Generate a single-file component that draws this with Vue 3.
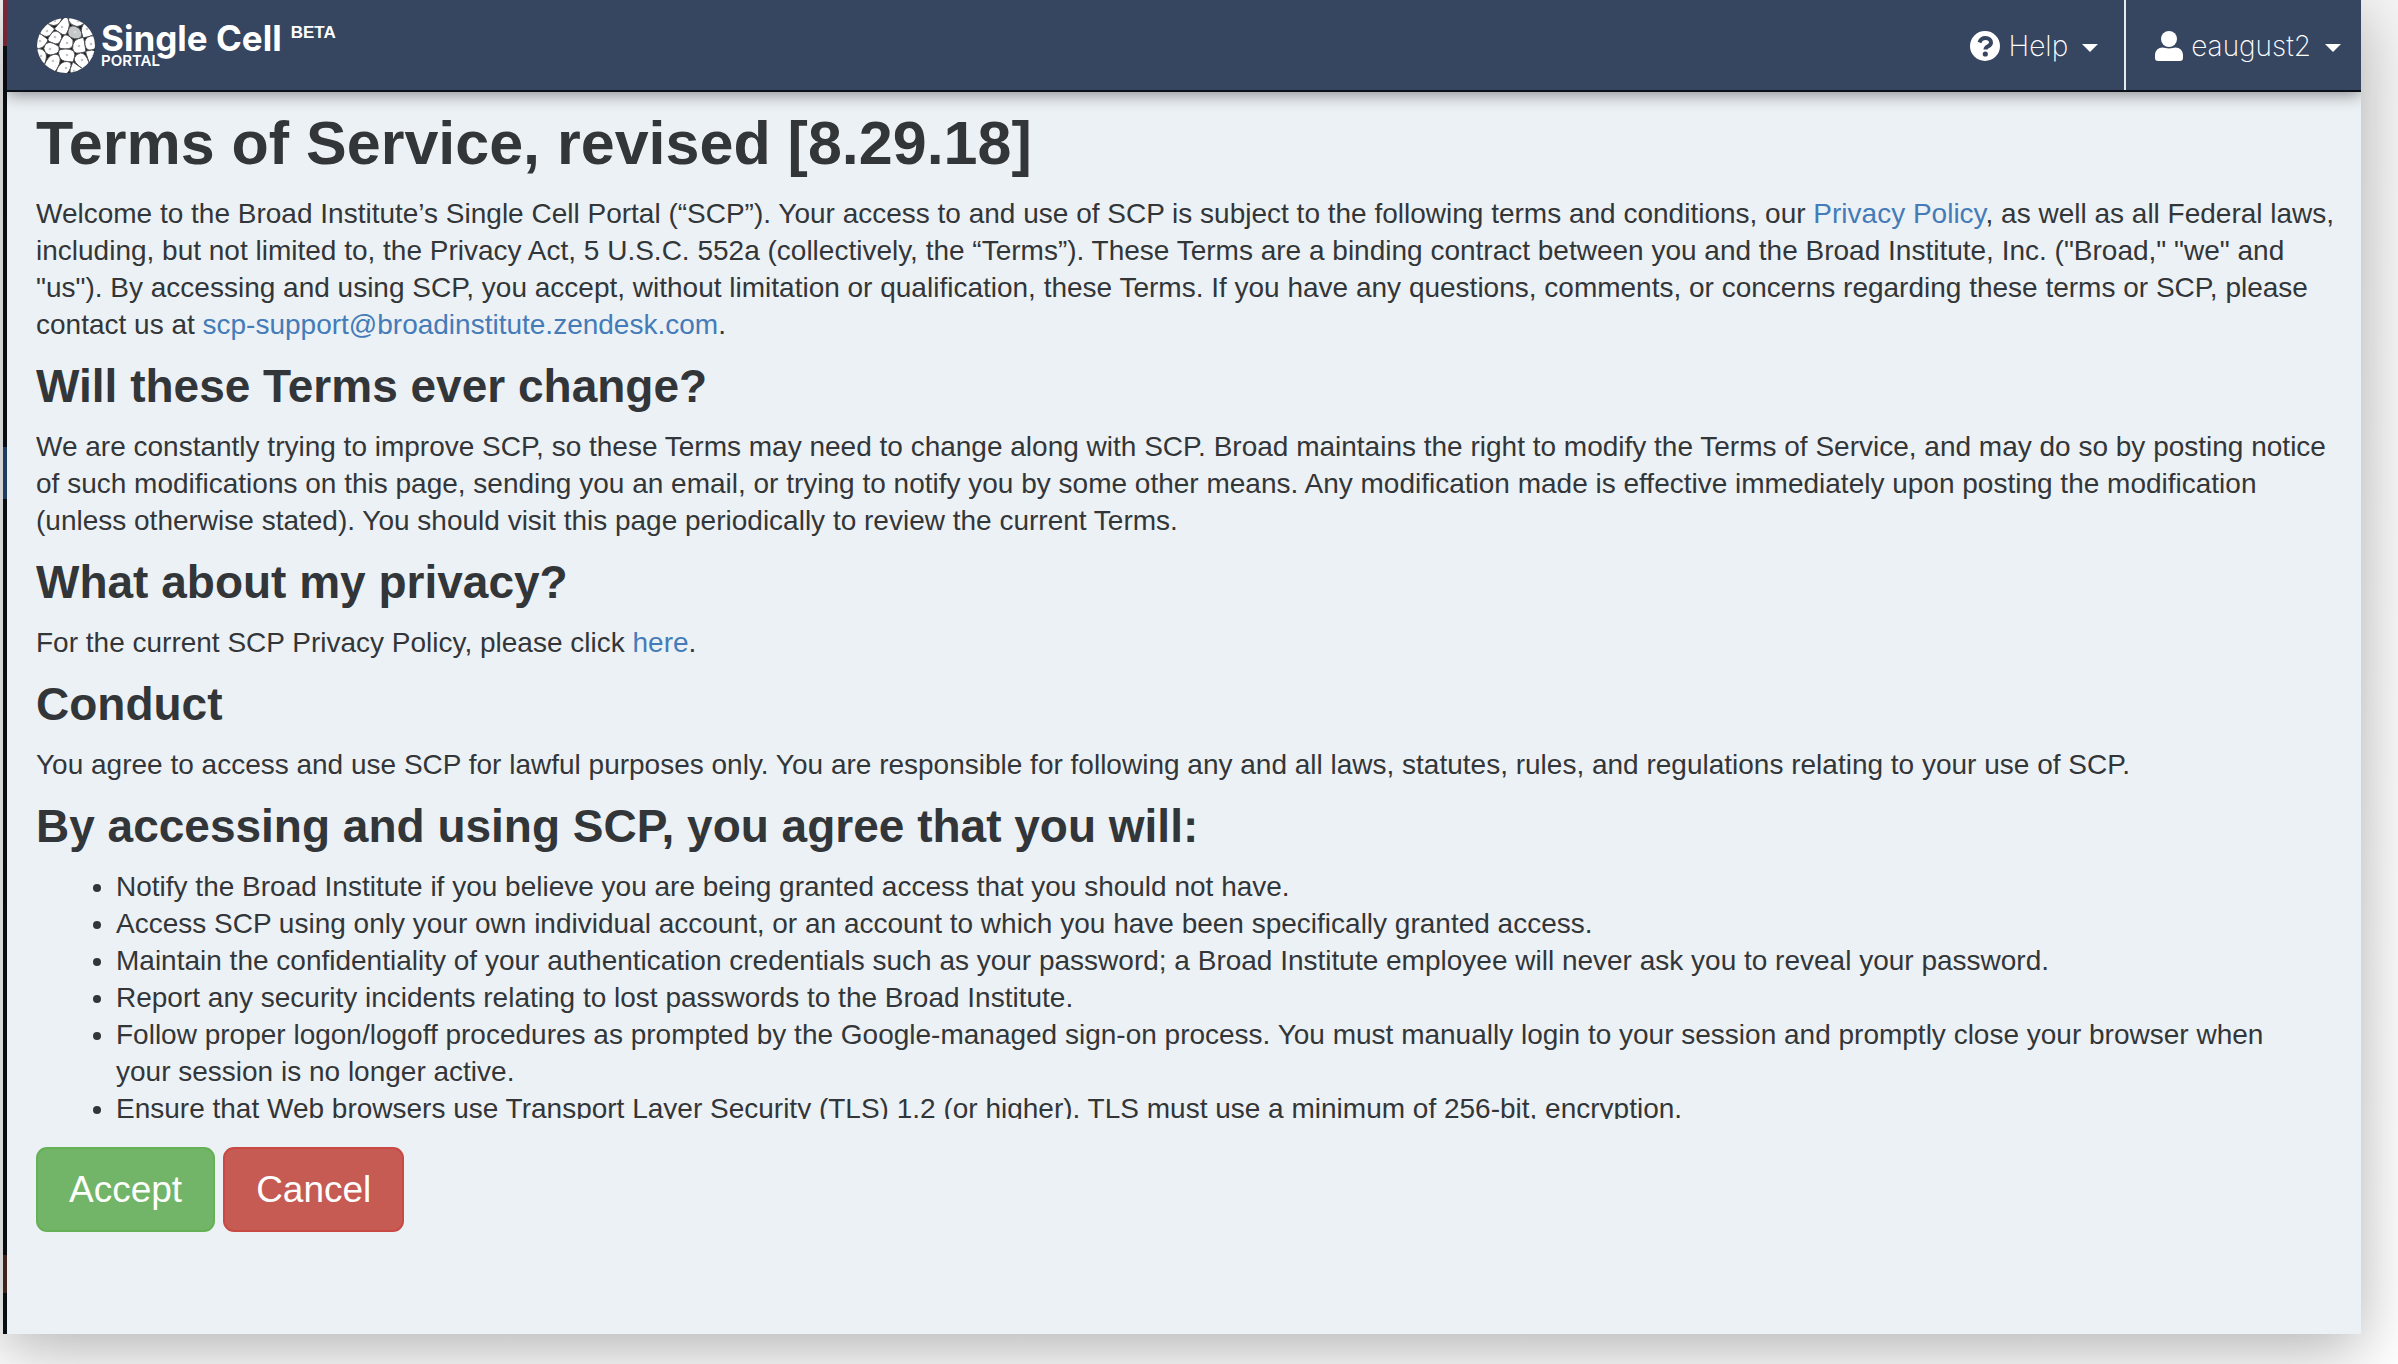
<script setup>
const rules = [
  'Notify the Broad Institute if you believe you are being granted access that you should not have.',
  'Access SCP using only your own individual account, or an account to which you have been specifically granted access.',
  'Maintain the confidentiality of your authentication credentials such as your password; a Broad Institute employee will never ask you to reveal your password.',
  'Report any security incidents relating to lost passwords to the Broad Institute.',
  'Follow proper logon/logoff procedures as prompted by the Google-managed sign-on process. You must manually login to your session and promptly close your browser when your session is no longer active.',
  'Ensure that Web browsers use Transport Layer Security (TLS) 1.2 (or higher). TLS must use a minimum of 256-bit, encryption.',
]

// Nuclei of the logo's cells; the last one is the grey cell
const nuclei = [
  [18, 3], [25, 9], [41, 3], [10, 13], [18, 19], [50, 11], [3, 23], [30, 25], [42, 28], [54, 26],
  [13, 31], [4, 38], [30, 37], [16, 43], [45, 42], [29, 50], [56, 38], [37, 53], [38, 14],
]

// Keep the part of the polygon that is nearer to a than to b
function clip(poly, a, b) {
  const side = (p) => (p[0] - a[0]) ** 2 + (p[1] - a[1]) ** 2 - (p[0] - b[0]) ** 2 - (p[1] - b[1]) ** 2
  const out = []
  poly.forEach((p, i) => {
    const q = poly[(i + 1) % poly.length]
    const sp = side(p)
    const sq = side(q)
    if (sp <= 0) out.push(p)
    if (sp * sq < 0) {
      const t = sp / (sp - sq)
      out.push([p[0] + t * (q[0] - p[0]), p[1] + t * (q[1] - p[1])])
    }
  })
  return out
}

// Rounded cell outline: curves through the edge midpoints of the cell's polygon
function outline(a) {
  let poly = [[-2, -2], [60, -2], [60, 57], [-2, 57]]
  for (const b of nuclei) if (b !== a) poly = clip(poly, a, b)
  const mid = (p, q) => `${(p[0] + q[0]) / 2} ${(p[1] + q[1]) / 2}`
  const n = poly.length
  return `M${mid(poly[n - 1], poly[0])}` + poly.map((p, i) => `Q${p[0]} ${p[1]} ${mid(p, poly[(i + 1) % n])}`).join('') + 'Z'
}

const cells = nuclei.map((n, i) => ({ x: n[0], y: n[1], d: outline(n), grey: i === nuclei.length - 1 }))
</script>

<template>
  <div class="screen">
    <div class="edge" aria-hidden="true">
      <i class="mark red"></i><i class="mark blue"></i><i class="mark brown"></i>
    </div>
    <div class="window">
      <header class="navbar">
        <a class="brand" href="#">
          <svg class="logo" viewBox="0 0 58 55" aria-hidden="true">
            <defs>
              <clipPath id="disc"><ellipse cx="29" cy="27.5" rx="29" ry="27.5" /></clipPath>
            </defs>
            <g clip-path="url(#disc)">
              <rect width="58" height="55" fill="#1d1f22" />
              <g v-for="(c, i) in cells" :key="i">
                <path :d="c.d" :fill="c.grey ? '#c6c9c9' : '#fff'" stroke="#4a4c4f" stroke-width="1" />
                <circle :cx="c.x" :cy="c.y" r="1.3" :fill="c.grey ? '#dcdcdc' : '#c4c4c4'" />
              </g>
            </g>
          </svg>
          <span class="name"><span class="title">Single Cell</span><span class="sub">PORTAL</span></span>
          <sup class="beta">BETA</sup>
        </a>
        <nav class="menu">
          <button class="item" type="button">
            <svg width="32" height="32" viewBox="0 0 32 32" aria-hidden="true">
              <circle cx="16" cy="16" r="15" fill="#fff" />
              <path d="M10.500 12.500C11.500 9.500 13.500 8 16.500 8c3.200 0 5.500 1.800 5.500 4.700 0 3.800-5.500 3.300-5.500 6.800" fill="none" stroke="#364560" stroke-width="4" />
              <circle cx="16.300" cy="24" r="2.600" fill="#364560" />
            </svg>
            <span>Help</span><i class="caret"></i>
          </button>
          <button class="item user" type="button">
            <svg width="28" height="32" viewBox="0 0 28 32" aria-hidden="true">
              <circle cx="14" cy="9" r="8" fill="#fff" />
              <path d="M0 28v-3c0-4.500 3.500-7.500 7.500-7.500 2 0 3.500 1 6.500 1s4.500-1 6.500-1c4 0 7.500 3 7.500 7.500v3c0 1.700-1 3-3 3H3c-2 0-3-1.300-3-3Z" fill="#fff" />
            </svg>
            <span>eaugust2</span><i class="caret"></i>
          </button>
        </nav>
      </header>

      <main class="content">
        <div class="terms">
          <h1>Terms of Service, revised [8.29.18]</h1>
          <p>
            Welcome to the Broad Institute’s Single Cell Portal (“SCP”). Your access to and use of SCP is subject to the
            following terms and conditions, our <a href="#">Privacy Policy</a>, as well as all Federal laws, including,
            but not limited to, the Privacy Act, 5 U.S.C. 552a (collectively, the “Terms”). These Terms are a binding
            contract between you and the Broad Institute, Inc. ("Broad," "we" and "us"). By accessing and using SCP, you
            accept, without limitation or qualification, these Terms. If you have any questions, comments, or concerns
            regarding these terms or SCP, please contact us at
            <a href="mailto:scp-support@broadinstitute.zendesk.com">scp-support@broadinstitute.zendesk.com</a>.
          </p>
          <h2>Will these Terms ever change?</h2>
          <p>
            We are constantly trying to improve SCP, so these Terms may need to change along with SCP. Broad maintains
            the right to modify the Terms of Service, and may do so by posting notice of such modifications on this
            page, sending you an email, or trying to notify you by some other means. Any modification made is effective
            immediately upon posting the modification (unless otherwise stated). You should visit this page periodically
            to review the current Terms.
          </p>
          <h2>What about my privacy?</h2>
          <p>For the current SCP Privacy Policy, please click <a href="#">here</a>.</p>
          <h2>Conduct</h2>
          <p>
            You agree to access and use SCP for lawful purposes only. You are responsible for following any and all
            laws, statutes, rules, and regulations relating to your use of SCP.
          </p>
          <h2>By accessing and using SCP, you agree that you will:</h2>
          <ul>
            <li v-for="rule in rules" :key="rule">{{ rule }}</li>
          </ul>
        </div>
        <div class="actions">
          <button class="btn accept" type="button">Accept</button>
          <button class="btn cancel" type="button">Cancel</button>
        </div>
      </main>
    </div>
  </div>
</template>

<style>
body {
  margin: 0;
  background: #fff;
}
</style>

<style scoped>
.screen {
  box-sizing: border-box;
  display: flex;
  height: 100vh;
  padding: 0 37px 30px 3px;
  overflow: hidden;
  background: linear-gradient(#f5f5f5, #fff);
  font-family: "Liberation Sans", Arial, sans-serif;
  font-size: 28px;
  line-height: 37px;
  color: #333638;
}
.edge {
  display: flex;
  flex-direction: column;
  flex: none;
  width: 4px;
  background: #0b1016;
  box-shadow: 0 20px 50px rgba(0, 0, 0, 0.3);
}
.mark {
  height: 46px;
}
.red {
  background: #822a3c;
}
.blue {
  margin-top: 401px;
  height: 52px;
  background: #25456f;
}
.brown {
  margin-top: 756px;
  height: 38px;
  background: #4a2a20;
}
.window {
  display: flex;
  flex-direction: column;
  flex: 1;
  min-width: 0;
  background: #ecf1f5;
  box-shadow: 0 16px 60px rgba(0, 0, 0, 0.3);
}
.navbar {
  display: flex;
  flex: none;
  justify-content: space-between;
  height: 90px;
  border-bottom: 2px solid #0c1018;
  background: #364560;
  box-shadow: 0 2px 16px rgba(0, 0, 0, 0.45);
  clip-path: inset(0 0 -40px 0);
}
.brand {
  display: flex;
  align-items: flex-start;
  padding: 18px 0 0 30px;
  color: #fff;
  text-decoration: none;
}
.logo {
  width: 58px;
  height: 55px;
}
.name {
  display: flex;
  flex-direction: column;
  margin-left: 6px;
  font-family: Inter, sans-serif;
}
.title {
  font-size: 35px;
  font-weight: 700;
  line-height: 40px;
}
.sub {
  font-size: 15px;
  font-weight: 600;
  line-height: 5px;
}
.beta {
  margin-left: 9px;
  font-size: 17px;
  font-weight: 700;
  line-height: 29px;
}
.menu {
  display: flex;
}
.item {
  display: flex;
  align-items: center;
  padding: 2px 26px 0 28px;
  border: 0;
  background: none;
  color: #fff;
  font-family: Inter, sans-serif;
  font-size: 28px;
  font-weight: 200;
}
.item span {
  margin: 0 14px 0 8px;
}
.user {
  padding: 2px 20px 0 29px;
  border-left: 2px solid #e7eaee;
}
.caret {
  margin-top: 4px;
  border: 8px solid transparent;
  border-top-color: #fff;
  border-bottom: 0;
}
.content {
  display: flex;
  flex-direction: column;
  flex: 1;
  min-height: 0;
  padding: 0 12px 102px 29px;
}
.terms {
  flex: 1;
  min-height: 0;
  overflow: hidden;
}
h1,
h2 {
  margin: 18px 0 17px;
  font-weight: 700;
}
h1 {
  margin: 17px 0 18px;
  font-size: 61px;
  line-height: 68px;
}
h2 {
  font-size: 46px;
  line-height: 50px;
}
p,
ul {
  margin: 0 0 18px;
}
ul {
  padding: 0 24px 0 80px;
}
a {
  color: #447bb8;
  text-decoration: none;
}
.actions {
  display: flex;
  gap: 8px;
  padding-top: 28px;
}
.btn {
  box-sizing: border-box;
  height: 85px;
  padding: 0 31px;
  border: 2px solid;
  border-radius: 11px;
  color: #fff;
  font-family: inherit;
  font-size: 37px;
}
.accept {
  border-color: #66b157;
  background: #72b568;
}
.cancel {
  border-color: #c94a45;
  background: #c65b54;
}
</style>
